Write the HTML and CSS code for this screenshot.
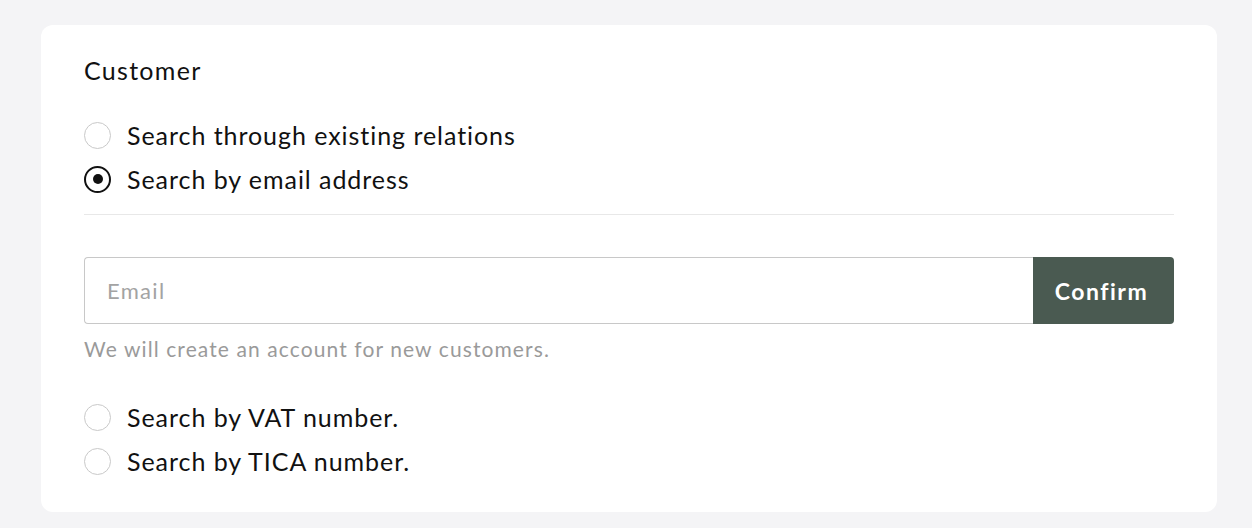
FILE: index.html
```html
<!DOCTYPE html>
<html>
<head>
<meta charset="utf-8">
<link rel="stylesheet" href="styles.css">
</head>
<body>
<div class="card">
  <div class="title">Customer</div>
  <div class="radios">
    <label class="radio"><span class="dot"></span><span>Search through existing relations</span></label>
    <label class="radio"><span class="dot checked"></span><span>Search by email address</span></label>
  </div>
  <div class="divider"></div>
  <div class="field">
    <div class="input">Email</div>
    <div class="btn">Confirm</div>
  </div>
  <div class="help">We will create an account for new customers.</div>
  <div class="radios bottom">
    <label class="radio"><span class="dot"></span><span>Search by VAT number.</span></label>
    <label class="radio"><span class="dot"></span><span>Search by TICA number.</span></label>
  </div>
</div>
</body>
</html>
```
FILE: styles.css
```css
html, body { margin: 0; padding: 0; }
body {
  background: #f4f4f6;
  font-family: "Lato", "Liberation Sans", sans-serif;
  color: #111;
  padding: 25px 35px 17px 41px;
}
.card {
  background: #fff;
  border-radius: 12px;
  padding: 30px 43px 36px 43px;
}
.title {
  font-size: 25px;
  line-height: 30px;
  letter-spacing: 1.3px;
  margin-bottom: 35px;
}
.radios { display: flex; flex-direction: column; gap: 14px; }
.radio {
  display: flex;
  align-items: center;
  gap: 16px;
  font-size: 25px;
  line-height: 30px;
  letter-spacing: 0.95px;
}
.dot {
  width: 27px;
  height: 27px;
  border: 1px solid #c9c9c9;
  border-radius: 50%;
  box-sizing: border-box;
  position: relative;
  flex: none;
}
.dot.checked { border: 2px solid #111; }
.dot.checked::after {
  content: "";
  position: absolute;
  left: 50%; top: 50%;
  width: 10px; height: 10px;
  margin: -5px 0 0 -5px;
  border-radius: 50%;
  background: #111;
}
.divider { height: 1px; background: #e8e8e8; margin: 20px 0 42px; }
.field { display: flex; height: 67px; }
.input {
  flex: 1;
  border: 1px solid #c8c8c8;
  border-right: none;
  border-radius: 4px 0 0 4px;
  display: flex;
  align-items: center;
  padding-left: 22px;
  font-size: 22px;
  letter-spacing: 1.3px;
  color: #a3a3a3;
}
.btn {
  width: 141px;
  background: #4a5a51;
  color: #fff;
  border-radius: 0 4px 4px 0;
  display: flex;
  align-items: center;
  justify-content: center;
  padding-right: 4px;
  box-sizing: border-box;
  font-size: 23px;
  font-weight: 700;
  letter-spacing: 1.5px;
}
.help {
  font-size: 21px;
  letter-spacing: 1.1px;
  color: #9a9a9a;
  margin-top: 12px;
  line-height: 26px;
}
.radios.bottom { margin-top: 40px; }
```
